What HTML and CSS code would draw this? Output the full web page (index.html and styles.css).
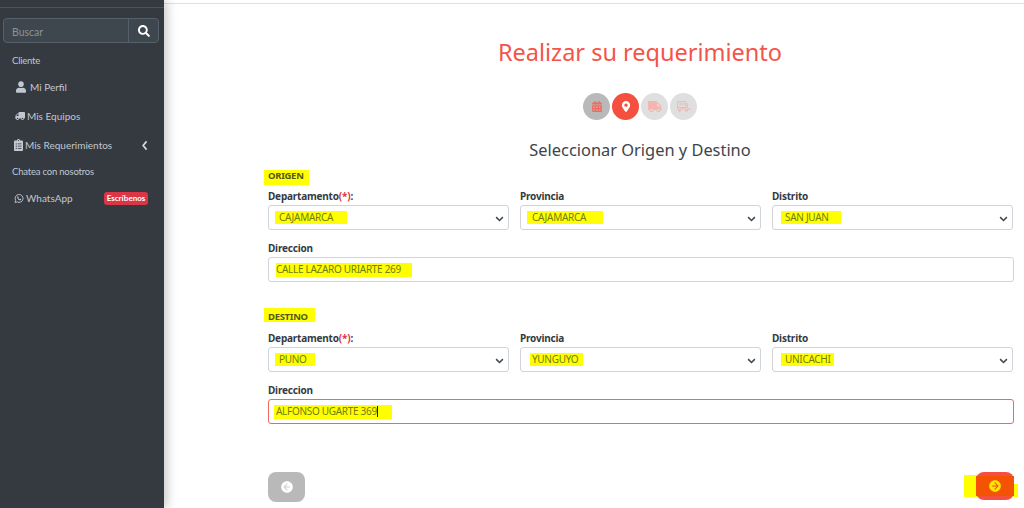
FILE: index.html
```html
<!DOCTYPE html>
<html lang="es">
<head>
<meta charset="utf-8">
<title>Realizar su requerimiento</title>
<link rel="stylesheet" href="styles.css">
</head>
<body>
<div class="app">
  <aside class="sidebar">
    <div class="side-rule"></div>
    <div class="search">
      <span class="search-input">Buscar</span>
      <span class="search-btn">
        <svg class="ic-search" viewBox="0 0 512 512"><path fill="#fff" d="M505 442.700L405.300 343c-4.500-4.500-10.600-7-17-7H372c27.600-35.300 44-79.700 44-128C416 93.100 322.900 0 208 0S0 93.100 0 208s93.100 208 208 208c48.300 0 92.700-16.400 128-44v16.300c0 6.400 2.500 12.500 7 17l99.700 99.700c9.400 9.400 24.600 9.400 33.900 0l28.300-28.300c9.400-9.400 9.400-24.600.1-34zM208 336c-70.700 0-128-57.200-128-128 0-70.700 57.200-128 128-128 70.700 0 128 57.200 128 128 0 70.700-57.200 128-128 128z"/></svg>
      </span>
    </div>
    <div class="side-head head-client">Cliente</div>
    <a class="side-item item-perfil">
      <svg class="ic ic-user" viewBox="0 0 448 512"><path d="M224 256c70.700 0 128-57.300 128-128S294.700 0 224 0 96 57.300 96 128s57.300 128 128 128zm89.600 32h-16.700c-22.200 10.200-46.900 16-72.900 16s-50.600-5.800-72.900-16h-16.700C60.200 288 0 348.200 0 422.400V464c0 26.500 21.500 48 48 48h352c26.500 0 48-21.500 48-48v-41.600c0-74.200-60.200-134.400-134.400-134.400z"/></svg>
      <span>Mi Perfil</span>
    </a>
    <a class="side-item item-equipos">
      <svg class="ic ic-truck" viewBox="0 0 640 512"><path d="M624 352h-16V243.900c0-12.700-5.100-24.900-14.100-33.900L494 110.100c-9-9-21.200-14.100-33.900-14.100H416V48c0-26.500-21.500-48-48-48H48C21.500 0 0 21.500 0 48v320c0 26.500 21.500 48 48 48h16c0 53 43 96 96 96s96-43 96-96h128c0 53 43 96 96 96s96-43 96-96h48c8.800 0 16-7.200 16-16v-32c0-8.800-7.200-16-16-16zM160 464c-26.500 0-48-21.500-48-48s21.500-48 48-48 48 21.500 48 48-21.500 48-48 48zm320 0c-26.500 0-48-21.500-48-48s21.500-48 48-48 48 21.500 48 48-21.500 48-48 48zm80-208H416V144h44.100l99.900 99.900V256z" transform="matrix(-1 0 0 1 640 0)"/></svg>
      <span>Mis Equipos</span>
    </a>
    <a class="side-item item-req">
      <svg class="ic ic-clip" viewBox="0 0 384 512"><path d="M336 64h-80c0-35.300-28.700-64-64-64s-64 28.700-64 64H48C21.500 64 0 85.500 0 112v352c0 26.500 21.500 48 48 48h288c26.500 0 48-21.500 48-48V112c0-26.500-21.500-48-48-48zM192 40c13.300 0 24 10.700 24 24s-10.700 24-24 24-24-10.700-24-24 10.700-24 24-24zM96 424c-13.300 0-24-10.700-24-24s10.700-24 24-24 24 10.700 24 24-10.700 24-24 24zm0-96c-13.300 0-24-10.700-24-24s10.700-24 24-24 24 10.700 24 24-10.700 24-24 24zm0-96c-13.300 0-24-10.700-24-24s10.700-24 24-24 24 10.700 24 24-10.700 24-24 24zm224 176c0 4.400-3.600 8-8 8H168c-4.400 0-8-3.600-8-8v-16c0-4.400 3.600-8 8-8h144c4.400 0 8 3.600 8 8v16zm0-96c0 4.400-3.600 8-8 8H168c-4.400 0-8-3.600-8-8v-16c0-4.400 3.600-8 8-8h144c4.400 0 8 3.600 8 8v16zm0-96c0 4.400-3.600 8-8 8H168c-4.400 0-8-3.600-8-8v-16c0-4.400 3.600-8 8-8h144c4.400 0 8 3.600 8 8v16z"/></svg>
      <span>Mis Requerimientos</span>
      <svg class="ic-chev" viewBox="0 0 10 16"><path d="M8 2 3 8l5 6" fill="none" stroke="#d5dade" stroke-width="2.400"/></svg>
    </a>
    <div class="side-head head-chat">Chatea con nosotros</div>
    <a class="side-item item-wa">
      <svg class="ic ic-wa" viewBox="0 0 24 24"><path fill="none" stroke="#c2c7d0" stroke-width="2.200" d="M2.500 21.500l1.400-5.100A9.500 9.500 0 1 1 7.600 20.100z"/><path d="M8.600 7.200c-.9.800-1.200 2-.7 3.400 1 2.700 3.100 4.700 5.800 5.600 1.300.4 2.400 0 3.200-.9.500-.6.500-1.300.2-1.600l-1.900-1c-.4-.2-.7 0-1 .4l-.6.7c-1.500-.6-2.700-1.700-3.400-3.200l.6-.6c.3-.3.4-.6.2-1l-.8-1.800c-.4-.7-1.200-.8-1.800-.5z"/></svg>
      <span>WhatsApp</span>
      <span class="badge">Escríbenos</span>
    </a>
  </aside>

  <main class="main">
    <div class="topbar"></div>
    <div class="heading">
      <h1 class="title">Realizar su requerimiento</h1>
      <div class="steps">
        <span class="step step-done">
          <svg class="step-ic" viewBox="0 0 448 512"><path fill="#f4685c" d="M0 464c0 26.500 21.500 48 48 48h352c26.500 0 48-21.500 48-48V192H0v272zm320-196c0-6.600 5.400-12 12-12h40c6.600 0 12 5.400 12 12v40c0 6.600-5.400 12-12 12h-40c-6.600 0-12-5.400-12-12v-40zm0 128c0-6.600 5.400-12 12-12h40c6.600 0 12 5.400 12 12v40c0 6.600-5.400 12-12 12h-40c-6.600 0-12-5.400-12-12v-40zM192 268c0-6.600 5.400-12 12-12h40c6.600 0 12 5.400 12 12v40c0 6.600-5.400 12-12 12h-40c-6.600 0-12-5.400-12-12v-40zm0 128c0-6.600 5.400-12 12-12h40c6.600 0 12 5.400 12 12v40c0 6.600-5.400 12-12 12h-40c-6.600 0-12-5.400-12-12v-40zM64 268c0-6.600 5.400-12 12-12h40c6.600 0 12 5.400 12 12v40c0 6.600-5.400 12-12 12H76c-6.600 0-12-5.400-12-12v-40zm0 128c0-6.600 5.400-12 12-12h40c6.600 0 12 5.400 12 12v40c0 6.600-5.400 12-12 12H76c-6.600 0-12-5.400-12-12v-40zM400 64h-48V16c0-8.800-7.200-16-16-16h-32c-8.800 0-16 7.200-16 16v48H160V16c0-8.800-7.200-16-16-16h-32c-8.800 0-16 7.200-16 16v48H48C21.500 64 0 85.500 0 112v48h448v-48c0-26.500-21.500-48-48-48z"/></svg>
        </span>
        <span class="step step-active">
          <svg class="step-ic" viewBox="0 0 384 512"><path fill="#fff" d="M172.300 501.700C27 291 0 269.400 0 192 0 86 86 0 192 0s192 86 192 192c0 77.400-27 99-172.300 309.700-9.500 13.800-29.900 13.800-39.400 0zM192 272a80 80 0 1 0 0-160 80 80 0 0 0 0 160z"/></svg>
        </span>
        <span class="step step-todo">
          <svg class="step-ic wide" viewBox="0 0 640 512"><path fill="#f5b4ae" d="M624 352h-16V243.900c0-12.700-5.100-24.900-14.100-33.900L494 110.100c-9-9-21.200-14.100-33.900-14.100H416V48c0-26.500-21.500-48-48-48H48C21.500 0 0 21.500 0 48v320c0 26.500 21.500 48 48 48h16c0 53 43 96 96 96s96-43 96-96h128c0 53 43 96 96 96s96-43 96-96h48c8.800 0 16-7.200 16-16v-32c0-8.800-7.200-16-16-16zM160 464c-26.500 0-48-21.500-48-48s21.500-48 48-48 48 21.500 48 48-21.500 48-48 48zm320 0c-26.500 0-48-21.500-48-48s21.500-48 48-48 48 21.500 48 48-21.500 48-48 48zm80-208H416V144h44.100l99.900 99.900V256z"/></svg>
        </span>
        <span class="step step-todo">
          <svg class="step-ic wide" viewBox="0 0 640 512"><path fill="#f5b4ae" fill-rule="evenodd" d="M0 32C0 14 14 0 32 0h352c18 0 32 14 32 32v288H0V32zm40 8v240h336V40H40zm40 40h256v40H80V80zm0 80h256v40H80v-40zM448 96h48v256h144v40H0v-40h448zM120 352a72 72 0 1 1 0 144 72 72 0 0 1 0-144zm320 0a72 72 0 1 1 0 144 72 72 0 0 1 0-144z"/></svg>
        </span>
      </div>
      <h2 class="subtitle">Seleccionar Origen y Destino</h2>
    </div>

    <form class="form">
      <section class="group">
        <div class="group-title"><span class="mark mark-origen">ORIGEN</span></div>
        <div class="row">
          <div class="field">
            <label class="label">Departamento<span class="req">(*)</span>:</label>
            <div class="select"><span class="mark m-caja">CAJAMARCA</span><svg class="chev" viewBox="0 0 12 8"><path d="M1.500 1.500 6 6l4.500-4.500" fill="none" stroke="#3f474e" stroke-width="2"/></svg></div>
          </div>
          <div class="field">
            <label class="label">Provincia</label>
            <div class="select"><span class="mark m-caja2">CAJAMARCA</span><svg class="chev" viewBox="0 0 12 8"><path d="M1.500 1.500 6 6l4.500-4.500" fill="none" stroke="#3f474e" stroke-width="2"/></svg></div>
          </div>
          <div class="field">
            <label class="label">Distrito</label>
            <div class="select"><span class="mark m-sanjuan">SAN JUAN</span><svg class="chev" viewBox="0 0 12 8"><path d="M1.500 1.500 6 6l4.500-4.500" fill="none" stroke="#3f474e" stroke-width="2"/></svg></div>
          </div>
        </div>
        <label class="label label-dir">Direccion</label>
        <div class="input"><span class="mark m-dir1">CALLE LAZARO URIARTE 269</span></div>
      </section>

      <section class="group group-destino">
        <div class="group-title"><span class="mark mark-destino">DESTINO</span></div>
        <div class="row">
          <div class="field">
            <label class="label">Departamento<span class="req">(*)</span>:</label>
            <div class="select"><span class="mark m-puno">PUNO</span><svg class="chev" viewBox="0 0 12 8"><path d="M1.500 1.500 6 6l4.500-4.500" fill="none" stroke="#3f474e" stroke-width="2"/></svg></div>
          </div>
          <div class="field">
            <label class="label">Provincia</label>
            <div class="select"><span class="mark m-yun">YUNGUYO</span><svg class="chev" viewBox="0 0 12 8"><path d="M1.500 1.500 6 6l4.500-4.500" fill="none" stroke="#3f474e" stroke-width="2"/></svg></div>
          </div>
          <div class="field">
            <label class="label">Distrito</label>
            <div class="select"><span class="mark m-uni">UNICACHI</span><svg class="chev" viewBox="0 0 12 8"><path d="M1.500 1.500 6 6l4.500-4.500" fill="none" stroke="#3f474e" stroke-width="2"/></svg></div>
          </div>
        </div>
        <label class="label label-dir">Direccion</label>
        <div class="input input-error"><span class="mark m-dir2">ALFONSO UGARTE 369<i class="caret"></i></span></div>
      </section>

      <div class="actions">
        <button class="nav-btn back" type="button">
          <svg class="nav-ic" viewBox="0 0 512 512"><path fill="#fff" d="M256 504C119 504 8 393 8 256S119 8 256 8s248 111 248 248-111 248-248 248z"/><path fill="#b9b9b9" d="M285 380 176 281h200v-50H176l109-99-34-37L100 256l151 161z" opacity=".7"/></svg>
        </button>
        <div class="next-wrap">
          <span class="next-mark"></span>
          <span class="next-mark2"></span>
          <button class="nav-btn next" type="button">
            <svg class="nav-ic" viewBox="0 0 512 512"><path fill="#ffe500" d="M256 504C119 504 8 393 8 256S119 8 256 8s248 111 248 248-111 248-248 248z"/><path fill="#e8521c" d="M227 132l109 99H136v50h200L227 380l34 37 151-161L261 95z"/></svg>
          </button>
        </div>
      </div>
    </form>
  </main>
</div>
</body>
</html>
```

FILE: styles.css
```css
* { box-sizing: border-box; }
html, body { margin: 0; height: 508px; overflow: hidden; background: #fff; }
body { font-family: "Noto Sans", "Open Sans", sans-serif; color: #343a40; }

.app { display: flex; height: 508px; }

/* Sidebar */
.sidebar {
  width: 164px;
  flex: none;
  background: #343a40;
  box-shadow: 3px 0 10px rgba(0,0,0,.22);
  padding: 7px 5px 0 3px;
  position: relative;
  z-index: 2;
  color: #c2c7d0;
  font-family: Lato, "Noto Sans", sans-serif;
  font-size: 10px;
}
.side-rule { height: 1px; background: #4b545c; margin: 0 -5px 10px -3px; }
.search {
  display: flex;
  height: 25px;
  background: #3f474e;
  border: 1px solid #56606a;
  border-radius: 4px;
}
.search-input {
  flex: 1;
  padding: 6px 8px 0;
  color: #8a929a;
  line-height: 14px;
  font-size: 10.500px;
}
.search-btn {
  width: 30px;
  border-left: 1px solid #56606a;
  display: flex;
  align-items: center;
  justify-content: center;
}
.ic-search { width: 12px; height: 12px; }
.side-head { padding-left: 9px; line-height: 14px; font-size: 9.500px; letter-spacing: -.2px; }
.head-client { margin-top: 11px; }
.side-item { display: flex; align-items: center; height: 14px; line-height: 14px; }
.item-perfil { margin-top: 12px; padding-left: 13px; gap: 4px; }
.item-equipos { margin-top: 15px; padding-left: 12px; gap: 2px; }
.item-req { margin-top: 15px; padding-left: 11px; gap: 2px; }
.head-chat { margin-top: 13px; }
.item-wa { margin-top: 12px; padding-left: 11px; gap: 2px; }
.ic { fill: #c2c7d0; height: 12px; flex: none; }
.ic-user { width: 10px; }
.ic-truck { width: 10px; height: 10px; }
.ic-clip { width: 9px; height: 12px; }
.ic-wa { width: 10px; height: 11px; }
.ic-chev { width: 7px; height: 11px; margin-left: auto; margin-right: 11px; }
.badge {
  margin-left: auto;
  margin-right: 11px;
  background: #dc3545;
  color: #fff;
  font-size: 8px;
  font-weight: 700;
  line-height: 13px;
  height: 13px;
  width: 44px;
  text-align: center;
  border-radius: 3px;
}

/* Main */
.main { flex: 1; min-width: 0; display: flex; flex-direction: column; }
.topbar { height: 4px; flex: none; border-bottom: 1px solid #dee2e6; }
.heading { padding-left: 92px; }
.title {
  margin: 32px 0 0;
  text-align: center;
  font-weight: 400;
  font-size: 23.500px;
  line-height: 32px;
  color: #f4544a;
}
.steps { display: flex; justify-content: center; gap: 2px; margin-top: 25px; }
.step {
  width: 27px;
  height: 27px;
  border-radius: 50%;
  display: flex;
  align-items: center;
  justify-content: center;
}
.step-done { background: #b9b9b9; }
.step-active { background: #f44f3f; }
.step-todo { background: #dfdfdf; }
.step-ic { width: 10px; height: 11px; }
.step-ic.wide { width: 14px; height: 11px; }
.subtitle {
  margin: 18px 0 0;
  text-align: center;
  font-weight: 400;
  font-size: 16.400px;
  line-height: 24px;
  color: #3d444b;
}
.form { padding: 8px 11px 0 104px; display: flex; flex-direction: column; flex: 1; }
.group-title { display: flex; align-items: flex-start; font-size: 9.500px; font-weight: 700; height: 15px; color: #343a40; letter-spacing: -.3px; }
.group-destino { margin-top: 26px; }
.row { display: grid; grid-template-columns: repeat(3, 241px); column-gap: 11px; margin-top: 4px; }
.group-destino .row { margin-top: 8px; }
.label { display: block; font-size: 10px; font-weight: 700; line-height: 14px; color: #343a40; letter-spacing: -.2px; }
.req { color: #dc3545; }
.select, .input {
  display: flex;
  align-items: center;
  height: 25px;
  background: #fff;
  border: 1px solid #ced4da;
  border-radius: 3px;
  font-size: 10px;
  color: #6b7480;
  letter-spacing: -.3px;
  white-space: nowrap;
}
.select { margin-top: 2px; padding-left: 6px; position: relative; }
.chev { width: 9px; height: 6px; position: absolute; right: 4px; top: 10px; }
.label-dir { margin-top: 11px; }
.input { margin-top: 2px; padding-left: 7px; width: 746px; }
.input-error { border-color: #f0685c; }

.mark { background: #ffff00; color: #6f7d14; display: inline-block; line-height: 13px; }
.group-title .mark { color: #55591d; margin-left: -4px; padding-left: 4px; }
.mark-origen { padding-right: 5px; height: 15px; line-height: 11px; }
.mark-destino { padding-right: 7px; padding-top: 1px; height: 14px; line-height: 15px; }
.m-caja { padding: 0 14px 0 4px; }
.m-caja2 { padding: 0 17px 0 5px; }
.m-sanjuan { padding: 0 12px 0 4px; margin-left: 2px; }
.m-dir1 { padding: 0 11px 0 0; height: 14px; }
.m-puno { padding: 0 8px 0 4px; }
.m-yun { padding: 0 5px 0 2px; margin-left: 3px; }
.m-uni { padding: 0 3px 0 4px; margin-left: 2px; }
.m-dir2 { padding: 0 14px 0 2px; margin-left: -2px; height: 14px; position: relative; }
.caret { display: inline-block; width: 1px; height: 11px; background: #222; vertical-align: -2px; }

.actions { display: flex; justify-content: space-between; margin-top: 48px; width: 746px; }
.nav-btn {
  display: flex;
  align-items: center;
  justify-content: center;
  border: 0;
  padding: 0;
  border-radius: 8px;
}
.back { width: 37px; height: 30px; background: #b9b9b9; }
.next { width: 38px; height: 28px; background: #f44f3f; position: relative; }
.next-wrap { position: relative; }
.next::before {
  content: "";
  position: absolute;
  left: 0; right: 0; top: 4px; bottom: 4px;
  background: #f55304;
}
.next .nav-ic { position: relative; }
.next-mark { position: absolute; left: -12px; top: 3px; width: 14px; height: 22px; background: #ffff00; }
.next-mark2 { position: absolute; right: -4px; top: 12px; width: 6px; height: 13px; background: #ffff00; }
.nav-ic { width: 12px; height: 12px; }
```
